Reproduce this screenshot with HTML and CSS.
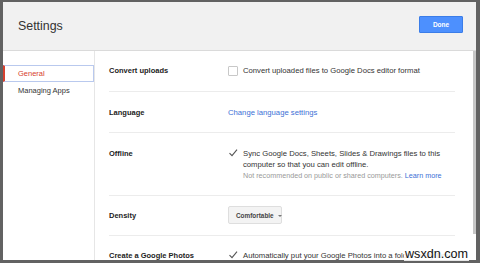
FILE: index.html
```html
<!DOCTYPE html>
<html lang="en">
<head>
    <meta charset="UTF-8">
    <meta name="viewport" content="width=device-width, initial-scale=1.0">
    <title>Settings</title>
    <link rel="stylesheet" href="styles.css">
</head>
<body>
    <div class="dialog">
        <div class="header">
            <h1 class="title">Settings</h1>
            <button class="done">Done</button>
        </div>

        <div class="main">
            <div class="sidebar">
                <div class="nav-item active">General</div>
                <div class="nav-item">Managing Apps</div>
            </div>

            <div class="content">
                <div class="row">
                    <div class="label">Convert uploads</div>
                    <div class="option">
                        <span class="checkbox"></span>
                        <span>Convert uploaded files to Google Docs editor format</span>
                    </div>
                </div>

                <div class="row">
                    <div class="label">Language</div>
                    <div class="value"><a class="link" href="#">Change language settings</a></div>
                </div>

                <div class="row">
                    <div class="label">Offline</div>
                    <div class="option">
                        <span class="checkbox checked">
                            <svg viewBox="0 0 10 10" width="10" height="10"><polyline points="1.5,5.2 4,7.6 9,1.6" fill="none" stroke="#555" stroke-width="1.1"/></svg>
                        </span>
                        <div>
                            <div>Sync Google Docs, Sheets, Slides &amp; Drawings files to this</div>
                            <div>computer so that you can edit offline.</div>
                            <div class="hint">Not recommended on public or shared computers. <a class="link" href="#">Learn more</a></div>
                        </div>
                    </div>
                </div>

                <div class="row row-density">
                    <div class="label">Density</div>
                    <div class="value">
                        <button class="dropdown">Comfortable<span class="caret"></span></button>
                    </div>
                </div>

                <div class="row row-last">
                    <div class="label">Create a Google Photos</div>
                    <div class="option">
                        <span class="checkbox checked">
                            <svg viewBox="0 0 10 10" width="10" height="10"><polyline points="1.5,5.2 4,7.6 9,1.6" fill="none" stroke="#555" stroke-width="1.1"/></svg>
                        </span>
                        <span>Automatically put your Google Photos into a folder in My Drive</span>
                    </div>
                </div>
            </div>

            <div class="scrollbar">
                <div class="thumb"></div>
            </div>
        </div>
    </div>

    <div class="watermark">wsxdn.com</div>
</body>
</html>
```

FILE: styles.css
```css
body {
    margin: 0;
    height: 263px;
    overflow: hidden;
    font-family: "Liberation Sans", Arial, sans-serif;
    background: #626262;
    position: relative;
}

.dialog {
    margin: 2px 0 0 3px;
    width: 473px;
    height: 258px;
    background: #fff;
    display: flex;
    flex-direction: column;
    overflow: hidden;
}

.header {
    height: 48px;
    flex-shrink: 0;
    display: flex;
    align-items: center;
    justify-content: space-between;
    padding: 0 13px 0 15px;
    background: #f1f1f1;
    border-bottom: 1px solid #dadada;
}

.title {
    margin: 0;
    font-size: 12.4px;
    font-weight: normal;
    color: #333;
}

.done {
    width: 44px;
    height: 17px;
    margin-bottom: 3px;
    padding: 0;
    border: 1px solid #3b7de8;
    border-radius: 1px;
    background: #4d90fe;
    color: #fff;
    font-family: inherit;
    font-size: 6.5px;
    font-weight: bold;
}

.main {
    flex: 1;
    display: flex;
    min-height: 0;
}

.sidebar {
    width: 91px;
    flex-shrink: 0;
    padding-top: 14px;
    border-right: 1px solid #e6e6e6;
}

.nav-item {
    height: 17px;
    line-height: 17px;
    padding-left: 15px;
    font-size: 7.5px;
    color: #333;
    box-sizing: border-box;
}

.nav-item.active {
    padding-left: 13px;
    border: 1px solid #b9c9ee;
    border-left: 2px solid #d6402f;
    line-height: 15px;
    color: #d6402f;
}

.content {
    flex: 1;
    padding: 0 18px 0 14px;
    font-size: 7.7px;
    line-height: 11px;
    color: #333;
}

.row {
    display: grid;
    grid-template-columns: 119px 1fr;
    align-items: start;
    padding: 15px 0 14px;
    border-bottom: 1px solid #ececec;
}

.row:first-child {
    padding: 14px 0 15px;
}

.row-density {
    align-items: center;
    padding: 10px 0 11px;
}

.row-last {
    border-bottom: none;
    padding-top: 14px;
}

.label {
    font-weight: bold;
    font-size: 7.5px;
    color: #222;
}

.option {
    display: flex;
    gap: 5px;
    white-space: nowrap;
}

.checkbox {
    width: 8px;
    height: 8px;
    margin-top: 1px;
    flex-shrink: 0;
    border: 1px solid #c8c8c8;
    border-radius: 1px;
    position: relative;
}

.checkbox.checked {
    border-color: transparent;
}

.checkbox svg {
    position: absolute;
    left: -1px;
    top: -2px;
}

.hint {
    font-size: 7.2px;
    color: #999;
}

.link {
    color: #3c70d6;
    text-decoration: none;
}

.dropdown {
    width: 54px;
    height: 18px;
    padding: 0 0 0 7px;
    text-align: left;
    white-space: nowrap;
    border: 1px solid #dedede;
    border-radius: 2px;
    background: #f3f3f3;
    color: #444;
    font-family: inherit;
    font-size: 6.4px;
    font-weight: bold;
}

.caret {
    display: inline-block;
    margin-left: 4px;
    vertical-align: middle;
    border-left: 2px solid transparent;
    border-right: 2px solid transparent;
    border-top: 2px solid #777;
}

.scrollbar {
    width: 5px;
    flex-shrink: 0;
}

.thumb {
    height: 183px;
    background: #c6c6c6;
}

.watermark {
    position: absolute;
    right: 11px;
    bottom: 2px;
    padding: 0 1px;
    font-size: 12.6px;
    line-height: 13px;
    color: #111;
    background: rgba(255, 255, 255, 0.85);
}
```
